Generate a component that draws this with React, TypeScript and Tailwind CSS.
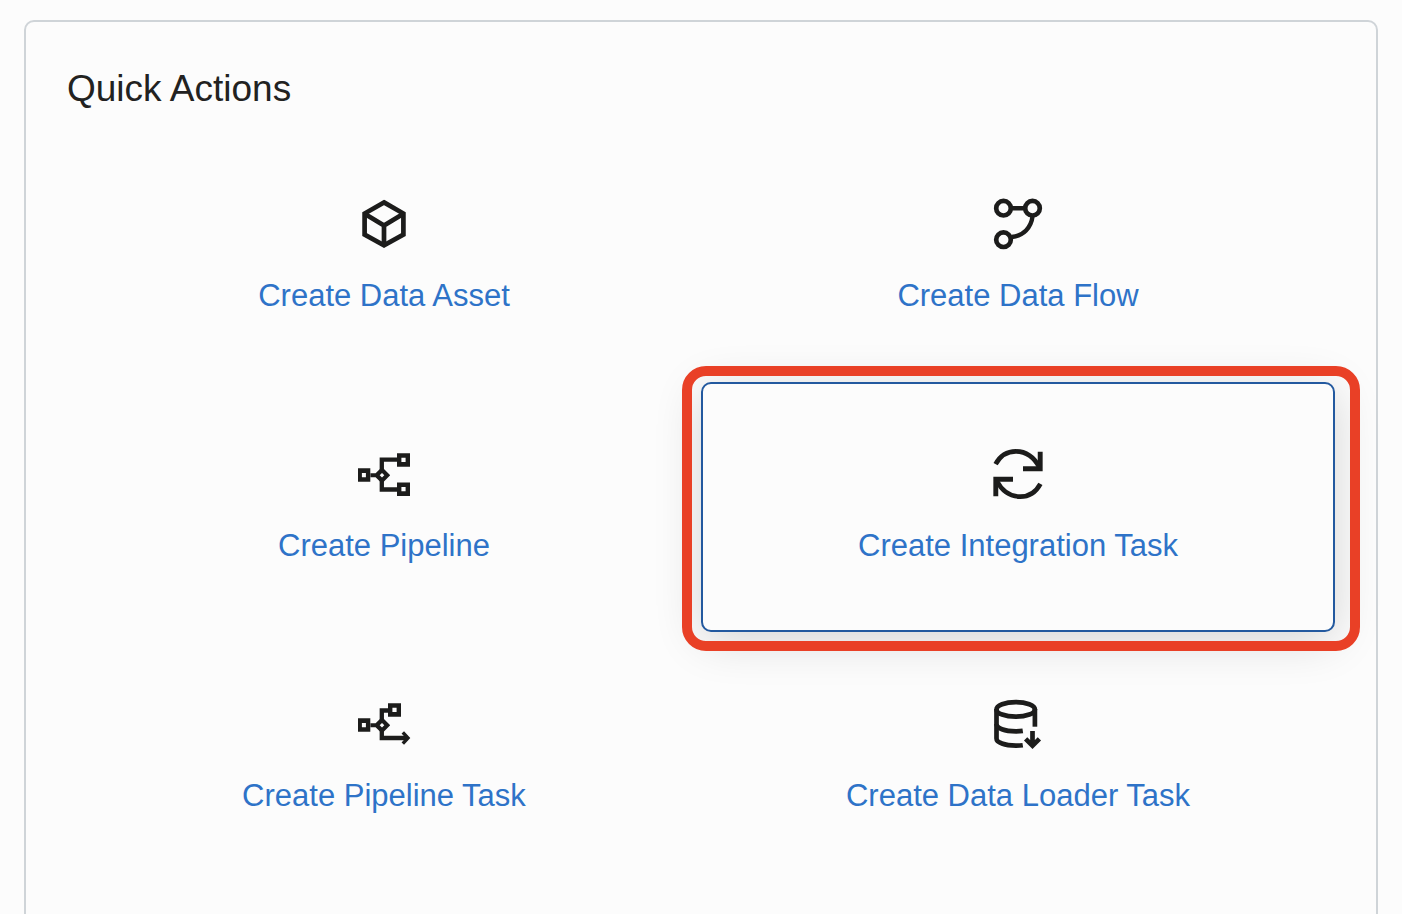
import type { ReactNode } from "react";

function Icon({ children }: { children: ReactNode }) {
  return (
    <svg
      aria-hidden="true"
      viewBox="12 12 56 56"
      className="h-14 w-14 shrink-0 text-[#1c1c1b]"
      fill="none"
      stroke="currentColor"
      strokeWidth="4.7"
    >
      {children}
    </svg>
  );
}

function PipelineStart() {
  return (
    <path
      fill="currentColor"
      stroke="none"
      fillRule="evenodd"
      d="M14 34.3H26.3V47.7H14Z M17.9 38.9V43.3H21.9V38.9Z M26 39.3H31.6L38 32.9L46.2 41.3L38 49.6L31.6 43.3H26Z M38 39L35.7 41.3L38 43.6L40.3 41.3Z"
    />
  );
}

const cubeIcon = (
  <Icon>
    <path d="M40 18.4L59.4 29.5V50.6L40 61.4L20.6 50.6V29.5Z" />
    <path d="M20.6 29.8L40 41.5L59.4 29.8M40 41.5V61.4" />
  </Icon>
);

const flowIcon = (
  <Icon>
    <circle cx="25.5" cy="24.2" r="7.3" />
    <circle cx="54.5" cy="24.2" r="7.3" />
    <circle cx="25.5" cy="55.7" r="7.3" />
    <path strokeWidth="4.4" d="M33 24.2H47M54.6 32C53.2 43.5 45.5 52 33.5 53" />
  </Icon>
);

const pipelineIcon = (
  <Icon>
    <PipelineStart />
    <path strokeWidth="4.3" d="M37.8 36V25.7H54M37.8 46V55.5H54" />
    <path
      fill="currentColor"
      stroke="none"
      fillRule="evenodd"
      d="M53 19.2H66V32.7H53Z M57.4 23.8V28H61.6V23.8Z M53 48.5H66V62H53Z M57.4 53.1V57.3H61.6V53.1Z"
    />
  </Icon>
);

const refreshIcon = (
  <Icon>
    <path d="M17.6 30.2C22 22 29.5 17.4 37.8 17.4C47.5 17.4 56 23 61.5 33.5M62.4 49.8C58 58 50.5 62.6 42.2 62.6C32.5 62.6 24 57 18.5 46.5" />
    <path strokeWidth="4.9" d="M62.2 17.7V34.8H45M17.8 62.3V45.2H35" />
  </Icon>
);

const pipelineTaskIcon = (
  <Icon>
    <PipelineStart />
    <path strokeWidth="4.3" d="M37.8 36V26.5H45M37.8 46V54H64" />
    <path strokeWidth="3.4" d="M58.8 48.4L64 54L58.8 59.6" />
    <path
      fill="currentColor"
      stroke="none"
      fillRule="evenodd"
      d="M44 19.2H57V32.7H44Z M48.4 23.8V28H52.6V23.8Z"
    />
  </Icon>
);

const loaderIcon = (
  <Icon>
    <ellipse cx="37.7" cy="25.4" rx="19.2" ry="7.3" />
    <path d="M56.9 25V42.7" />
    <path d="M18.5 25V54.5C18.5 58.5 26.5 61.6 38 61.6C40.5 61.6 42.8 61.5 44.8 61.2" />
    <path d="M18.5 40C18.5 44.3 26.5 47.3 38 47.3C40.5 47.3 42.8 47.2 44.8 46.9" />
    <path d="M54.5 47V61M47.6 54.9L54.5 61.7L61.4 54.9" />
  </Icon>
);

type Action = { label: string; icon: ReactNode; selected?: boolean };

const actions: Action[] = [
  { label: "Create Data Asset", icon: cubeIcon },
  { label: "Create Data Flow", icon: flowIcon },
  { label: "Create Pipeline", icon: pipelineIcon },
  { label: "Create Integration Task", icon: refreshIcon, selected: true },
  { label: "Create Pipeline Task", icon: pipelineTaskIcon },
  { label: "Create Data Loader Task", icon: loaderIcon },
];

function ActionTile({ label, icon, selected }: Action) {
  return (
    <div className="relative">
      <a
        href="#"
        className={
          "flex min-h-[250px] flex-col items-center gap-6 rounded-[10px] border-2 px-4 pt-[62px] text-[31px] leading-10 text-[#2e73c8] " +
          (selected
            ? "border-[#23599f] bg-[#fcfcfc] shadow-[0_8px_48px_rgba(0,0,0,0.16)]"
            : "border-transparent")
        }
      >
        {icon}
        <span>{label}</span>
      </a>
      {selected && (
        <div className="pointer-events-none absolute -top-4 -right-[25px] -bottom-[19px] -left-[19px] rounded-3xl border-10 border-[#e94026]" />
      )}
    </div>
  );
}

export default function App() {
  return (
    <main className="h-screen overflow-hidden bg-[#fcfcfc] px-6 pt-5 font-['Liberation_Sans',Arial,sans-serif]">
      <section className="min-h-screen rounded-[10px] border-2 border-[#cfd4d8] px-[41px] pt-[43px] pb-8">
        <h1 className="mb-[19px] text-[37px] leading-[48px] text-[#222221]">Quick Actions</h1>
        <div className="grid grid-cols-2">
          {actions.map((action) => (
            <ActionTile key={action.label} {...action} />
          ))}
        </div>
      </section>
    </main>
  );
}
